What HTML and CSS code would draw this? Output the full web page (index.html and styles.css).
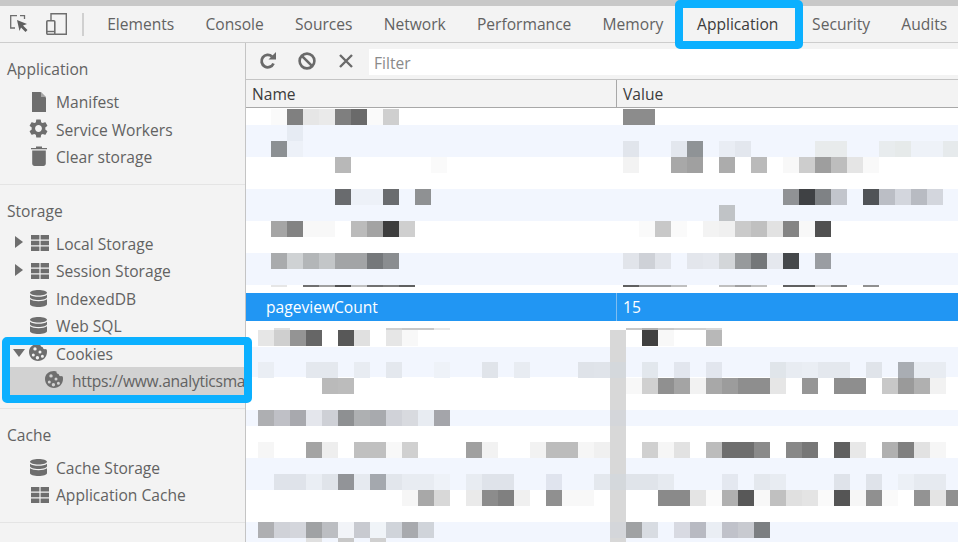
FILE: index.html
```html
<!DOCTYPE html>
<html lang="en">
<head>
<meta charset="utf-8">
<title>DevTools Application</title>
<link rel="stylesheet" href="styles.css">
</head>
<body>
<svg class="defs" aria-hidden="true">
  <symbol id="i-doc" viewBox="0 0 14 20"><path d="M0 0h8.5L14 5.5V20H0z" fill="#6e6e6e"/><path d="M9 0l5 5H9z" fill="#a5a5a5"/></symbol>
  <symbol id="i-gear" viewBox="2 2 20 20"><path fill="#6e6e6e" d="M19.14 12.94c.04-.3.06-.61.06-.94 0-.32-.02-.64-.07-.94l2.03-1.58a.49.49 0 0 0 .12-.61l-1.92-3.32a.488.488 0 0 0-.59-.22l-2.39.96c-.5-.38-1.03-.7-1.62-.94l-.36-2.54a.484.484 0 0 0-.48-.41h-3.84c-.24 0-.43.17-.47.41l-.36 2.54c-.59.24-1.13.57-1.62.94l-2.39-.96c-.22-.08-.47 0-.59.22L2.74 8.87c-.12.21-.08.47.12.61l2.03 1.58c-.05.3-.09.63-.09.94s.02.64.07.94l-2.03 1.58a.49.49 0 0 0-.12.61l1.92 3.32c.12.22.37.29.59.22l2.39-.96c.5.38 1.03.7 1.62.94l.36 2.54c.05.24.24.41.48.41h3.84c.24 0 .44-.17.47-.41l.36-2.54c.59-.24 1.13-.56 1.62-.94l2.39.96c.22.08.47 0 .59-.22l1.92-3.32c.12-.22.07-.47-.12-.61l-2.01-1.58zM12 15.6c-1.98 0-3.6-1.62-3.6-3.6s1.62-3.6 3.6-3.6 3.6 1.62 3.6 3.6-1.62 3.6-3.6 3.6z"/></symbol>
  <symbol id="i-trash" viewBox="0 0 16 20"><path fill="#6e6e6e" d="M0 2h5V0.6h6V2h5v1.2H0zM1.2 4.4h13.6V17.5c0 1.4-1 2.5-2.4 2.5H3.6c-1.4 0-2.4-1.100-2.400-2.500z"/></symbol>
  <symbol id="i-grid" viewBox="0 0 18 16"><path fill="#6e6e6e" d="M0 0h8.400v4.500H0zM9.600 0H18v4.500H9.600zM0 5.700h8.400v4.500H0zM9.600 5.700H18v4.500H9.600zM0 11.400h8.400V16H0zM9.600 11.400H18V16H9.600z"/></symbol>
  <symbol id="i-db" viewBox="0 0 17 17"><path fill="#6e6e6e" d="M8.500 0C13 0 17 1.200 17 2.800S13 5.600 8.500 5.600 0 4.400 0 2.800 4 0 8.500 0zM0 4.700C1.500 6 5 6.800 8.500 6.800S15.500 6 17 4.700v2.500c0 1.500-4 2.700-8.500 2.700S0 8.700 0 7.200zM0 9.200c1.500 1.300 5 2 8.500 2s7-.7 8.500-2v5c0 1.600-4 2.800-8.500 2.800S0 15.800 0 14.200z"/></symbol>
  <symbol id="i-cookie" viewBox="0 0 18 18"><path fill="#6e6e6e" fill-rule="evenodd" d="M9 0c1 0 1.800.200 2.500.500-.3 1.500.8 2.700 2.200 2.500 0 1.400 1.100 2.400 2.500 2.100.3.300.800.500 1.500.500.200.600.300 1.200.300 2.400 0 5-4 9-9 9s-9-4-9-9 4-8 9-8zM6 3.200a1.700 1.700 0 1 0 0 3.400 1.700 1.700 0 0 0 0-3.400zM11 6.400a1.500 1.500 0 1 0 0 3 1.500 1.500 0 0 0 0-3zM4.300 9.400a1.500 1.500 0 1 0 0 3 1.500 1.500 0 0 0 0-3zM13.400 10.800a1.500 1.500 0 1 0 0 3 1.500 1.500 0 0 0 0-3zM8.400 12a1.700 1.700 0 1 0 0 3.400 1.700 1.700 0 0 0 0-3.400z"/></symbol>
  <symbol id="i-right" viewBox="0 0 8 12"><path fill="#6e6e6e" d="M0 0l8 6-8 6z"/></symbol>
  <symbol id="i-down" viewBox="0 0 12 8"><path fill="#6e6e6e" d="M0 0h12L6 8z"/></symbol>
</svg>

<header class="strip"></header>
<nav class="tabbar">
  <svg class="tool-inspect" viewBox="0 0 18 18"><path fill="none" stroke="#6e6e6e" stroke-width="1.300" d="M7 .7H.7V13H5"/><path fill="none" stroke="#6e6e6e" stroke-width="1.300" d="M10 .7h4.500V4"/><path fill="#5f5f5f" d="M7 5l10 4-4 1.500 4.500 4.500-2 2-4.500-4.500L9.500 16z"/></svg>
  <svg class="tool-device" viewBox="0 0 21 22"><path fill="none" stroke="#6e6e6e" stroke-width="1.400" d="M5 7V.7h15.300v20.600H9"/><rect x=".8" y="7.800" width="8" height="13.500" rx="1" fill="none" stroke="#6e6e6e" stroke-width="1.600"/><path stroke="#6e6e6e" stroke-width="1.400" d="M1 18.500h8"/></svg>
  <span class="tool-sep"></span>
  <a class="tab">Elements</a>
  <a class="tab">Console</a>
  <a class="tab">Sources</a>
  <a class="tab">Network</a>
  <a class="tab">Performance</a>
  <a class="tab">Memory</a>
  <a class="tab tab-on">Application</a>
  <a class="tab">Security</a>
  <a class="tab">Audits</a>
</nav>

<div class="panes">
  <aside class="side">
    <section class="group">
      <h2 class="group-title">Application</h2>
      <div class="item"><svg class="ico ico-doc"><use href="#i-doc"/></svg><span class="label">Manifest</span></div>
      <div class="item"><svg class="ico ico-gear"><use href="#i-gear"/></svg><span class="label">Service Workers</span></div>
      <div class="item"><svg class="ico ico-trash"><use href="#i-trash"/></svg><span class="label">Clear storage</span></div>
    </section>
    <section class="group">
      <h2 class="group-title">Storage</h2>
      <div class="item"><svg class="arrow arrow-right"><use href="#i-right"/></svg><svg class="ico ico-grid"><use href="#i-grid"/></svg><span class="label">Local Storage</span></div>
      <div class="item"><svg class="arrow arrow-right"><use href="#i-right"/></svg><svg class="ico ico-grid"><use href="#i-grid"/></svg><span class="label">Session Storage</span></div>
      <div class="item"><svg class="ico ico-db"><use href="#i-db"/></svg><span class="label">IndexedDB</span></div>
      <div class="item"><svg class="ico ico-db"><use href="#i-db"/></svg><span class="label">Web SQL</span></div>
      <div class="item"><svg class="arrow arrow-down"><use href="#i-down"/></svg><svg class="ico ico-cookie"><use href="#i-cookie"/></svg><span class="label">Cookies</span></div>
      <div class="item item-sub"><svg class="ico ico-cookie"><use href="#i-cookie"/></svg><span class="label">https://www.analyticsma</span></div>
    </section>
    <section class="group">
      <h2 class="group-title">Cache</h2>
      <div class="item"><svg class="ico ico-db"><use href="#i-db"/></svg><span class="label">Cache Storage</span></div>
      <div class="item"><svg class="ico ico-grid"><use href="#i-grid"/></svg><span class="label">Application Cache</span></div>
    </section>
  </aside>

  <main class="main">
    <div class="filterbar">
      <svg class="btn btn-refresh" viewBox="0 0 18 18"><path fill="none" stroke="#6a6a6a" stroke-width="2.800" d="M14.500 11.500A6.200 6.200 0 1 1 13 4.500"/><path fill="#6a6a6a" d="M17 0v7.500H9.500z"/></svg>
      <svg class="btn btn-block" viewBox="0 0 18 18"><circle cx="9" cy="9" r="7.400" fill="none" stroke="#6a6a6a" stroke-width="2.600"/><path stroke="#6a6a6a" stroke-width="2.600" d="M3.800 3.800l10.400 10.400"/></svg>
      <svg class="btn btn-close" viewBox="0 0 14 14"><path stroke="#6a6a6a" stroke-width="2.400" d="M1 1l12 12M13 1L1 13"/></svg>
      <div class="filter">Filter</div>
    </div>
    <div class="thead"><div class="cell-name">Name</div><div class="cell-value">Value</div></div>
    <div class="tbody">
      <div class="row h17"></div>
      <div class="row tint h32"></div>
      <div class="row h32"></div>
      <div class="row tint h32"></div>
      <div class="row h32"></div>
      <div class="row tint h32"></div>
      <div class="row h8"></div>
      <div class="row selected"><div class="cell-name">pageviewCount</div><div class="cell-value">15</div></div>
      <div class="row h26"></div>
      <div class="row tint h30"></div>
      <div class="row h33"></div>
      <div class="row tint h16"></div>
      <div class="row h32"></div>
      <div class="row tint h32"></div>
      <div class="row h32"></div>
      <div class="row tint h20"></div>
      <div class="mosaic mosaic-upper" id="upper"></div>
      <div class="mosaic mosaic-lower" id="lower"></div>
    </div>
  </main>
</div>

<div class="callout callout-tab"></div>
<div class="callout callout-cookies"></div>
<script src="mosaic.js"></script>
</body>
</html>
```
FILE: styles.css
```css
* { box-sizing: border-box; }
html, body { margin: 0; height: 100%; }
body {
  position: relative;
  width: 958px;
  height: 542px;
  overflow: hidden;
  background: #fff;
  color: #626262;
  font: 15.6px/1.2 "Open Sans", "Noto Sans", sans-serif;
  display: flex;
  flex-direction: column;
}
.defs { position: absolute; width: 0; height: 0; }
.strip { height: 6px; flex: none; background: #c8c8c8; }

.tabbar {
  flex: none;
  height: 37px;
  display: flex;
  align-items: center;
  background: #f3f3f3;
  border-bottom: 1px solid #cdcdcd;
  padding-left: 10px;
  overflow: hidden;
}
.tool-inspect { flex: none; width: 18px; height: 18px; margin-right: 18px; }
.tool-device { flex: none; width: 21px; height: 22px; margin-right: 15px; }
.tool-sep { flex: none; width: 2px; height: 23px; background: #d0d0d0; margin-right: 7.600px; }
.tab { flex: none; padding: 1px 15.600px 0; white-space: nowrap; }
.tab-on { color: #3c3c3c; margin: 0 2.500px; }

.panes { flex: 1; min-height: 0; display: flex; }
.side {
  flex: none;
  width: 246px;
  background: #f3f3f3;
  border-right: 1px solid #c4c4c4;
  overflow: hidden;
}
.group { padding: 12px 0 13px; border-bottom: 1px solid #e4e4e4; }
.group-title {
  margin: 0 0 5px;
  padding-left: 7px;
  height: 28px;
  line-height: 28px;
  font-size: inherit;
  font-weight: 400;
}
.item {
  position: relative;
  height: 27.5px;
  display: flex;
  align-items: center;
  padding-left: 56px;
  white-space: nowrap;
}
.item-sub { background: #d2d2d2; margin: 0 0 0 10px; padding-left: 62px; }
.label { display: block; padding-top: 2px; }
.item-sub .label { letter-spacing: -0.280px; }
.ico { position: absolute; top: 50%; left: 38.500px; }
.item-sub .ico { left: 44px; }
.ico-doc { width: 14px; height: 20px; margin: -10px 0 0 -6.500px; }
.ico-gear { width: 19px; height: 19px; margin: -10px 0 0 -9.500px; }
.ico-trash { width: 16px; height: 20px; margin: -11px 0 0 -7.500px; }
.ico-grid { width: 18px; height: 16px; margin: -8px 0 0 -8px; }
.ico-db { width: 17px; height: 17px; margin: -8.500px 0 0 -8.500px; }
.ico-cookie { width: 18px; height: 18px; margin: -9.500px 0 0 -9.500px; }
.arrow { position: absolute; top: 50%; }
.arrow-right { left: 15px; width: 8px; height: 12px; margin-top: -7px; }
.arrow-down { left: 13px; width: 12px; height: 8px; margin-top: -4px; }

.main { flex: 1; min-width: 0; display: flex; flex-direction: column; }
.filterbar {
  flex: none;
  height: 37px;
  display: flex;
  align-items: center;
  background: #f3f3f3;
  border-bottom: 1px solid #c4c4c4;
  padding-left: 13px;
}
.btn { flex: none; }
.btn-refresh { width: 18px; height: 18px; margin-right: 21px; }
.btn-block { width: 18px; height: 18px; margin-right: 23px; }
.btn-close { width: 14px; height: 14px; margin-right: 16px; }
.filter {
  flex: 1;
  height: 26px;
  line-height: 28px;
  margin-top: 1px;
  background: #fff;
  padding-left: 5px;
  color: #8a8a8a;
}
.thead {
  flex: none;
  height: 28px;
  display: flex;
  align-items: stretch;
  background: #f3f3f3;
  border-bottom: 1px solid #a8a8a8;
  color: #3c3c3c;
}
.cell-name { width: 371px; line-height: 29px; padding-left: 6px; border-right: 1px solid #a8a8a8; }
.cell-value { flex: 1; line-height: 29px; padding-left: 6px; }

.tbody { position: relative; flex: 1; min-height: 0; overflow: hidden; }
.row { background: #fff; }
.tint { background: #f2f6fe; }
.h8 { height: 8px; } .h16 { height: 16px; } .h17 { height: 17px; } .h20 { height: 20px; }
.h26 { height: 26px; } .h30 { height: 30px; } .h32 { height: 32px; } .h33 { height: 33px; }
.selected { display: flex; height: 28px; background: #2196f3; color: #fff; }
.selected .cell-name { padding-left: 20px; border-right-color: #7fbdf0; }

.mosaic { position: absolute; }
.mosaic-upper { left: 25px; top: 1px; }
.mosaic-lower { left: 12px; top: 220px; }
.m-row { display: flex; height: 16px; }
.m-row.sliver { height: 2px; }
.m-row.tail { height: 4px; }
.m-cell { flex: none; width: 16px; }

.callout { position: absolute; border: 8px solid #0bb0ff; border-radius: 5px; }
.callout-tab { left: 675px; top: 0; width: 128px; height: 49px; }
.callout-cookies { left: 2px; top: 337px; width: 250px; height: 66px; }
```
FILE: mosaic.js
```js
var upper = [
  "0:fa 1:80 2:e6 3:ea 4:7f 5:6a 6:fa 7:cf 22:8c 23:8c",
  "1:e6ebf3",
  "0:8c9093 1:edf1f8 22:e1e5ec 25:e3e7ee 26:8f9396 28:e9edf4 29:e3e7ee 34:e8ebec 35:e8ebec 38:e8ecee 39:e6eaea 40:eef2f8 41:eef2f8 42:e6eaec",
  "4:b8 10:fa 22:f3 25:a8 26:a0 28:ac 30:ba 32:f8 33:cd 34:9e 35:bd 36:e5 37:f9",
  "",
  "4:696b6e 5:edf1f8 6:edf1f8 7:6a6c6f 9:8f9193 32:909295 33:3f4144 34:7f8285 35:c2c5cc 37:505357 38:bbbec5 39:d3d6dd 40:b8bbc2 41:d3d6dd",
  "28:c0c3c6",
  "0:a5 1:83 2:f8 3:f8 5:bb 6:a3 7:3d 8:cf 23:fa 24:c8 25:fa 27:f3 28:f0 29:ca 30:c0 31:e2 32:84 33:f8 34:50",
  "",
  "0:a9abad 1:cfd2d4 2:b3b6b8 3:c3c6c8 4:a2a4a6 5:a2a4a6 6:75787b 7:8a8d90 22:e1e4ea 23:ced1d7 24:e1e4ea 26:e3e6ec 27:e5e8ee 28:d3d6d9 29:979a9c 30:747779 31:e5e8ee 32:45484b 34:9a9da2",
  "",
  "s|0:e6 2:70 3:a0 4:50 5:c0 6:70 7:80 8:60 22:60 23:a0 24:a0 25:c0 28:c0 29:a0 30:c0 32:60 33:60 34:d0 35:80 37:90"
];
var lower = [
  "s|1:e0 8:d0 9:c8 10:c8 11:e8 23:c8 24:b0 25:c8 26:d0 27:d0 28:d8",
  "0:e6 1:cf 2:94 3:66 5:58 6:e0 8:e6 9:f8 22:d8 24:40 25:f8 28:b8",
  "22:d8",
  "0:eaeef4 3:e4e8ee 4:e4e8ee 6:e8ecf2 8:e4e8ee 11:eef2f8 14:e0e4ea 16:e8ecf2 20:dfe3e9 21:e0e4ea 22:d4d8dc 24:e2e7ed 26:e2e6ee 28:e2e6ee 32:e0e5ea 33:e8ecf2 34:eaeef4 35:e4e8ee 36:e4e8ee 38:e0e4ea 40:a9adb3 41:e8ecf2 42:e8ecf2",
  "4:ba 5:bc 22:d8 23:f8 24:d0 25:90 26:a4 27:f2 28:a8 29:9c 30:8e 31:8e 32:e6 34:96 36:8e 37:8e 39:c8 40:9a 41:b0 42:f2",
  "22:d8",
  "0:aeafb2 1:bfc0c6 2:a8a9ae 3:e4e6ec 4:ced0d6 5:8e9092 6:aeb0b2 7:a8aaae 8:d0d2d8 9:d8dadf 10:e8ecf2 11:a4a5aa 22:d4d6da",
  "22:d8",
  "0:f6 3:a4 4:ee 6:c0 7:c0 8:f8 9:d0 13:a0 14:f2 17:f2 18:bc 19:bc 20:f6 21:f0 22:d8 24:d0 25:f6 26:e2 28:bc 29:6e 30:6e 31:8a 33:88 34:77 36:60 37:e8 39:b0 40:80 41:e2 42:f6",
  "22:d8",
  "1:dfe3ea 2:dfe3ea 3:eaeef4 4:e0e4ea 5:929498 6:e6eaf0 7:a4a8ae 8:e2e6ec 9:e8ecf2 10:e8ecf2 11:eef2f8 13:e8ecf2 14:dfe3ea 15:dfe3ea 18:e0e4ee 21:e4e8ee 22:d4d8dc 23:e0e4ea 24:e0e4ea 25:e6eaf0 29:e4e8f0 31:e4e8ee 32:e8ecf2 36:dfe3ea 38:dfe3ea 40:ecf0f6 41:e6eaf0 42:e6eaf0",
  "9:f6 10:a8 11:d8 13:ea 14:8c 15:80 16:f0 18:90 19:f8 20:f8 22:d8 25:8a 26:8a 27:e4 28:fa 29:b0 30:58 31:f8 32:c0 33:e0 34:e4 35:fa 36:55 37:f6 38:90 39:fa 41:93 42:e4 43:90",
  "22:d8",
  "0:aeafb2 1:d0d2d8 2:d4d6dc 3:a0a2a4 4:bcbec2 5:f2f4f8 6:c8cad0 7:f0f4f8 8:d0d4da 9:a8aaae 10:d0d4da 22:d4d6da 23:a0a2a4 24:d8dce2 26:d8dae2 27:b8bac2 28:eaeef4 29:c0c2ca 30:c8cad0 31:7c7f82",
  "t|3:e0 5:c8 7:d0 22:d8"
];

function buildMosaic(id, rows) {
  var root = document.getElementById(id);
  rows.forEach(function (source) {
    var row = document.createElement("div");
    row.className = "m-row";
    var parts = source.split("|");
    if (parts.length > 1) {
      row.className += parts[0] === "s" ? " sliver" : " tail";
    }
    var map = {};
    parts[parts.length - 1].split(" ").forEach(function (token) {
      if (!token) return;
      var pair = token.split(":");
      map[pair[0]] = pair[1].length === 2 ? pair[1] + pair[1] + pair[1] : pair[1];
    });
    for (var c = 0; c < 44; c++) {
      var cell = document.createElement("div");
      cell.className = "m-cell";
      if (map[c]) cell.style.background = "#" + map[c];
      row.appendChild(cell);
    }
    root.appendChild(row);
  });
}
buildMosaic("upper", upper);
buildMosaic("lower", lower);
```
